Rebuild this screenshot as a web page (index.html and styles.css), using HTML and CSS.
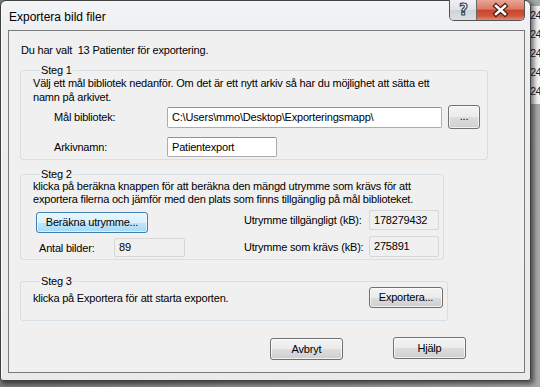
FILE: index.html
```html
<!DOCTYPE html>
<html lang="sv">
<head>
<meta charset="utf-8">
<title>Exportera bild filer</title>
<link rel="stylesheet" href="styles.css">
</head>
<body>
<div class="behind">
  <div class="behind-row">24</div>
  <div class="behind-row">24</div>
  <div class="behind-row">24</div>
  <div class="behind-row">24</div>
  <div class="behind-row">24</div>
</div>
<div class="window">
  <div class="titlebar">
    <div class="title">Exportera bild filer</div>
    <div class="caption-btns">
      <div class="cbtn help">
        <svg width="27" height="20" viewBox="0 0 27 20"><text x="13.5" y="15" text-anchor="middle" class="help-glyph">?</text></svg>
      </div>
      <div class="cbtn close">
        <svg width="47" height="20" viewBox="0 0 47 20"><path d="M19 6 L28 14 M28 6 L19 14" class="x-outline"/><path d="M19 6 L28 14 M28 6 L19 14" class="x-fill"/></svg>
      </div>
    </div>
  </div>
  <div class="client">
    <p class="intro">Du har valt&nbsp; 13 Patienter för exportering.</p>

    <fieldset class="group g1">
      <legend>Steg 1</legend>
      <p class="desc desc1">Välj ett mål bibliotek nedanför. Om det är ett nytt arkiv så har du möjlighet att sätta ett<br>namn på arkivet.</p>
      <div class="field-row row-path">
        <span class="lbl">Mål bibliotek:</span>
        <div class="textbox tb-path">C:\Users\mmo\Desktop\Exporteringsmapp\</div>
        <div class="btn btn-browse">...</div>
      </div>
      <div class="field-row row-name">
        <span class="lbl">Arkivnamn:</span>
        <div class="textbox tb-name">Patientexport</div>
      </div>
    </fieldset>

    <fieldset class="group g2">
      <legend>Steg 2</legend>
      <p class="desc">klicka på beräkna knappen för att beräkna den mängd utrymme som krävs för att<br>exportera filerna och jämför med den plats som finns tillgänglig på mål biblioteket.</p>
      <div class="calc">
        <div class="calc-left">
          <div class="btn btn-focus btn-calc">Beräkna utrymme...</div>
          <div class="pair pair-count">
            <span class="lbl lbl-count">Antal bilder:</span>
            <div class="textbox ro tb-count">89</div>
          </div>
        </div>
        <div class="calc-right">
          <div class="pair">
            <span class="lbl lbl-space">Utrymme tillgängligt (kB):</span>
            <div class="textbox ro tb-space">178279432</div>
          </div>
          <div class="pair pair-req">
            <span class="lbl lbl-space">Utrymme som krävs (kB):</span>
            <div class="textbox ro tb-space tb-req">275891</div>
          </div>
        </div>
      </div>
    </fieldset>

    <fieldset class="group g3">
      <legend>Steg 3</legend>
      <div class="export-row">
        <span class="export-text">klicka på Exportera för att starta exporten.</span>
        <div class="btn btn-export">Exportera...</div>
      </div>
    </fieldset>

    <div class="footer">
      <div class="btn btn-foot btn-cancel">Avbryt</div>
      <div class="btn btn-foot btn-help">Hjälp</div>
    </div>
  </div>
</div>
</body>
</html>
```

FILE: styles.css
```css
* { box-sizing: border-box; }
html, body { margin: 0; padding: 0; }
body {
  width: 540px;
  height: 387px;
  overflow: hidden;
  position: relative;
  background: linear-gradient(to right, #7d7d7d, #a9a9a9);
  font-family: "Liberation Sans", Arial, sans-serif;
  font-size: 11px;
  letter-spacing: -0.2px;
  color: #000;
}

/* window behind the dialog (free canvas) */
.behind {
  position: absolute;
  left: 500px;
  top: 6px;
  width: 40px;
  height: 98px;
  background: #f5f5f5;
  padding-left: 30px;
  font-size: 11px;
  line-height: 19px;
  color: #1b1b3a;
  letter-spacing: -0.6px;
}

/* dialog window */
.window {
  position: absolute;
  left: 0;
  top: 0;
  width: 531px;
  height: 381px;
  border: 1px solid #404040;
  border-radius: 6px 6px 3px 3px;
  background: linear-gradient(to bottom, #f3f4f5 0, #eceeef 40px, #e9eaeb 100%);
  box-shadow: 2px 2px 5px 1px rgba(0,0,0,0.55), inset 1px 1px 0 #fafafa;
  display: flex;
  flex-direction: column;
}
.titlebar {
  height: 29px;
  display: flex;
  justify-content: space-between;
  align-items: flex-start;
  padding: 0 5px 0 8px;
}
.title {
  margin-top: 9px;
  font-family: "Liberation Sans", Arial, sans-serif;
  font-size: 12px;
  letter-spacing: 0;
  color: #000;
}
.caption-btns {
  display: flex;
  margin-top: -1px;
  border: 1px solid #545454;
  border-top: none;
  border-radius: 0 0 5px 5px;
  overflow: hidden;
  height: 21px;
}
.cbtn { height: 20px; }
.cbtn svg { display: block; }
.help {
  width: 27px;
  background: linear-gradient(to bottom, #eef0f2 0, #e0e3e6 50%, #cfd3d7 51%, #dde0e3 100%);
  border-right: 1px solid #6a6a6a;
}
.help-glyph {
  font-family: "DejaVu Sans", sans-serif;
  font-weight: bold;
  font-size: 15px;
  fill: #ffffff;
  stroke: #3c4a58;
  stroke-width: 1.2px;
}
.close {
  width: 47px;
  background: linear-gradient(to bottom, #e9a796 0, #dc7a64 45%, #c9452d 52%, #d0573f 80%, #e38a70 100%);
}
.x-outline { stroke: #4a1a12; stroke-width: 5; stroke-linecap: square; fill: none; }
.x-fill { stroke: #ffffff; stroke-width: 2.6; stroke-linecap: square; fill: none; }

/* client area */
.client {
  margin: 0 5px 7px 7px;
  flex: 1;
  border: 1px solid #7b7b7b;
  background: #f0f0f0;
  padding: 0 0 0 11px;
}
.intro {
  margin: 13px 0 0 1px;
  line-height: 13px;
}

/* group boxes */
.group {
  margin: 0;
  padding: 0 0 0 12px;
  border: 1px solid #d5dfe5;
  border-radius: 3px;
  min-width: 0;
}
.group legend {
  padding: 0 1px;
  margin-left: 7px;
  line-height: 12px;
}
.g1 { width: 468px; margin-top: 7px; padding-bottom: 2px; }
.g2 { width: 424px; margin-top: 8px; padding-bottom: 2px; }
.g3 { width: 428px; margin-top: 15px; padding-bottom: 12px; }

.desc {
  margin: 0;
  line-height: 13px;
}
.desc1 {
  line-height: 14px;
  margin-bottom: 1px;
}

.field-row {
  display: flex;
  align-items: center;
  padding-left: 21px;
}
.field-row > * { flex-shrink: 0; }
.row-path { height: 24px; }
.row-name { height: 20px; margin-top: 8px; }
.lbl { display: inline-block; flex-shrink: 0; }
.field-row .lbl { width: 113px; }

.textbox {
  height: 21px;
  background: #fff;
  border: 1px solid #abadb3;
  border-top-color: #8e9196;
  border-radius: 2px;
  padding: 0 4px;
  line-height: 19px;
  white-space: nowrap;
  overflow: hidden;
  flex-shrink: 0;
}
.tb-path { width: 275px; }
.tb-name { width: 110px; height: 20px; line-height: 18px; }
.textbox.ro {
  background: #f0f0f0;
  border-color: #d7d7d7;
}

.btn {
  border: 1px solid #707070;
  border-radius: 3px;
  background: linear-gradient(to bottom, #f3f3f3 0, #ebebeb 50%, #dddddd 51%, #cfcfcf 100%);
  box-shadow: inset 0 0 0 1px rgba(255,255,255,0.7);
  text-align: center;
  white-space: nowrap;
  flex-shrink: 0;
}
.btn-browse {
  width: 32px;
  height: 24px;
  margin-left: 6px;
  line-height: 20px;
}
.btn-focus {
  border-color: #3c7fb1;
  background: linear-gradient(to bottom, #eaf6fd 0, #d9f0fc 50%, #bee6fd 51%, #a7d9f5 100%);
  box-shadow: inset 0 0 0 1px rgba(255,255,255,0.6);
}

/* step 2 */
.calc {
  display: flex;
  align-items: flex-start;
}
.calc-left {
  width: 211px;
  flex-shrink: 0;
  display: flex;
  flex-direction: column;
  align-items: flex-start;
}
.btn-calc {
  margin: 6px 0 0 3px;
  width: 112px;
  height: 21px;
  line-height: 19px;
}
.pair {
  display: flex;
  align-items: center;
}
.pair-count { margin: 5px 0 0 6px; }
.lbl-count { width: 75px; }
.tb-count { width: 71px; height: 19px; line-height: 17px; }
.calc-right {
  margin-top: 4px;
  flex-shrink: 0;
  display: flex;
  flex-direction: column;
}
.lbl-space { width: 125px; }
.tb-space { width: 70px; height: 20px; line-height: 18px; }
.pair-req { margin-top: 6px; }
.tb-req { height: 21px; line-height: 19px; }

/* step 3 */
.export-row {
  display: flex;
  align-items: center;
  justify-content: space-between;
  padding-right: 4px;
}
.btn-export {
  width: 74px;
  height: 21px;
  line-height: 19px;
}

/* footer */
.footer {
  display: flex;
  margin-top: 17px;
  padding-left: 250px;
  gap: 50px;
}
.btn-foot {
  width: 73px;
  height: 22px;
  line-height: 20px;
}
.btn-help { margin-top: -1px; }
```
